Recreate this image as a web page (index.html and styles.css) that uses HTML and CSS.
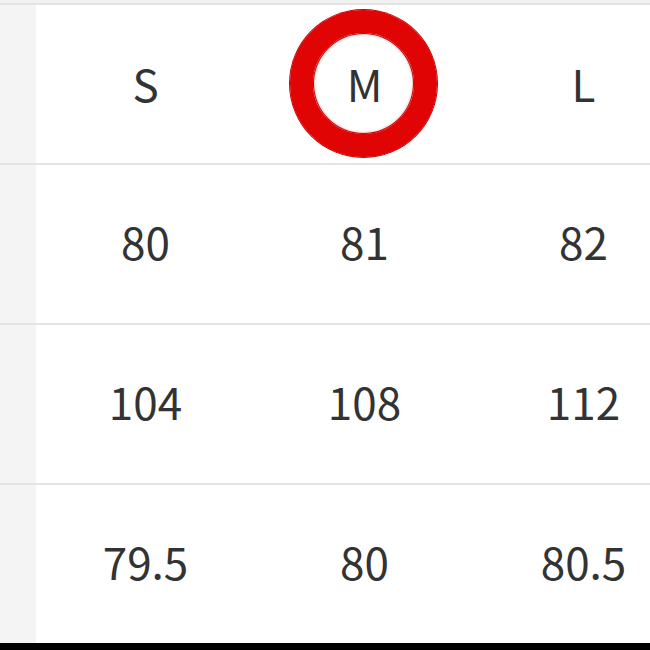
FILE: index.html
```html
<!DOCTYPE html>
<html lang="ko">
<head>
<meta charset="utf-8">
<link rel="stylesheet" href="styles.css">
</head>
<body>
<div class="page">
  <div class="topband"></div>
  <div class="table">
    <div class="row head">
      <div class="side"></div>
      <div class="cell">S</div>
      <div class="cell marked"><span class="ring"></span><span class="label">M</span></div>
      <div class="cell">L</div>
    </div>
    <div class="row">
      <div class="side"></div>
      <div class="cell">80</div>
      <div class="cell">81</div>
      <div class="cell">82</div>
    </div>
    <div class="row">
      <div class="side"></div>
      <div class="cell">104</div>
      <div class="cell">108</div>
      <div class="cell">112</div>
    </div>
    <div class="row">
      <div class="side"></div>
      <div class="cell">79.5</div>
      <div class="cell">80</div>
      <div class="cell">80.5</div>
    </div>
  </div>
  <div class="footer"></div>
</div>
</body>
</html>
```
FILE: styles.css
```css
html, body {
  margin: 0;
  padding: 0;
  background: #ffffff;
  overflow: hidden;
}
.page {
  width: 650px;
  height: 650px;
  overflow: hidden;
  display: flex;
  flex-direction: column;
}
.topband {
  height: 3px;
  background: #f1f1f1;
  flex: none;
}
.table {
  display: flex;
  flex-direction: column;
  flex: none;
}
.row {
  display: grid;
  grid-template-columns: 36px 219px 219px 219px;
  height: 160px;
  box-sizing: border-box;
  border-top: 2px solid #e3e3e3;
}
.side {
  background: #f4f4f4;
}
.cell {
  display: flex;
  align-items: center;
  justify-content: center;
  font-family: "Noto Sans CJK KR", "Noto Sans", sans-serif;
  font-size: 44px;
  color: #333333;
  line-height: 1;
  padding-bottom: 6px;
  box-sizing: border-box;
}
.head .cell {
  font-size: 44px;
  padding-bottom: 2px;
}
.marked {
  position: relative;
}
.label {
  position: relative;
}
.ring {
  position: absolute;
  left: 35px;
  top: 5px;
  width: 101px;
  height: 101px;
  border: 23px solid #e10404;
  border-radius: 50%;
  box-shadow: 0 0 0 1px #c80000, inset 0 0 0 1px #c80000, inset 0 0 3px 1px rgba(160,0,0,0.35);
}
.footer {
  flex: 1;
  background: #000000;
}
```
